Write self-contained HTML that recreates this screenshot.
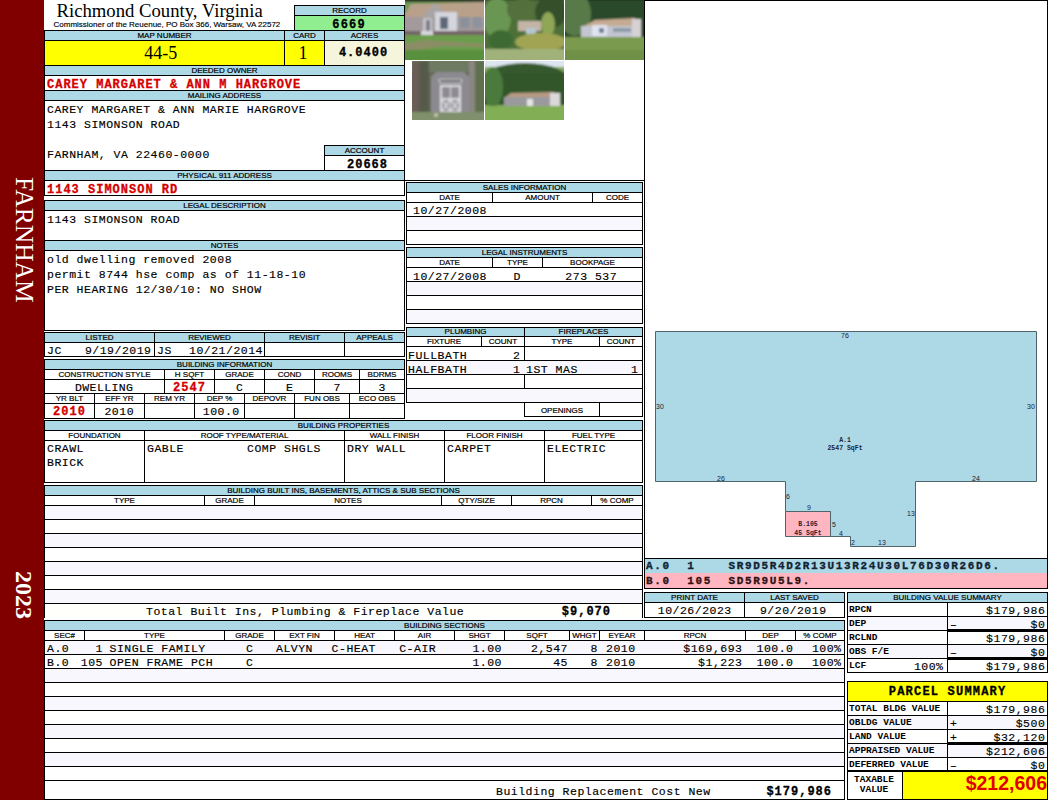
<!DOCTYPE html><html><head><meta charset="utf-8"><style>html,body{margin:0;padding:0;background:#fff;width:1050px;height:800px;overflow:hidden}body>div,#pg>div{position:absolute;white-space:pre}#pg{position:relative;width:1050px;height:800px;overflow:hidden}</style></head><body><div id="pg"><div style="left:0px;top:0px;width:44px;height:800px;background:#800000"></div>
<div style="top:-10.33px;font-family:'Liberation Serif', serif;font-size:12.33px;line-height:12.33px;color:#000;left:0px;"></div>
<div style="left:12px;top:177px;width:24px;height:126px;"><div style="position:absolute;left:0;top:0;transform-origin:0 0;transform:translate(24px,0) rotate(90deg);font-family:'Liberation Serif',serif;font-size:25.5px;line-height:24px;color:#fff;white-space:nowrap">FARNHAM</div></div>
<div style="left:12px;top:571px;width:24px;height:48px;"><div style="position:absolute;left:0;top:0;transform-origin:0 0;transform:translate(24px,0) rotate(90deg);font-family:'Liberation Serif',serif;font-weight:bold;font-size:24px;line-height:24px;color:#fff;white-space:nowrap">2023</div></div>
<div style="top:2.34px;font-family:'Liberation Serif', serif;font-size:18.7px;line-height:18.7px;color:#000;left:56.5px;">Richmond County, Virginia</div>
<div style="top:21.23px;font-family:'Liberation Sans', sans-serif;font-size:8px;line-height:8px;color:#000;-webkit-text-stroke:0.15px #000;left:53.5px;">Commissioner of the Reuenue, PO Box 366, Warsaw, VA 22572</div>
<div style="left:294px;top:5px;width:110px;height:10px;background:#add8e6"></div>
<div style="left:294px;top:15px;width:110px;height:15px;background:#90ee90"></div>
<div style="left:294px;top:5px;width:111px;height:1px;background:#000"></div>
<div style="left:294px;top:30px;width:111px;height:1px;background:#000"></div>
<div style="left:294px;top:5px;width:1px;height:26px;background:#000"></div>
<div style="left:404px;top:5px;width:1px;height:26px;background:#000"></div>
<div style="left:294px;top:15px;width:111px;height:1px;background:#000"></div>
<div style="top:7.23px;font-family:'Liberation Sans', sans-serif;font-size:8px;line-height:8px;color:#000;-webkit-text-stroke:0.2px #000;left:-50.5px;width:800px;text-align:center;">RECORD</div>
<div style="top:18.80px;font-family:'Liberation Mono', monospace;font-size:12px;line-height:12px;color:#000;font-weight:bold;letter-spacing:1.2px;-webkit-text-stroke:0.3px #000;left:-51.5px;width:800px;text-align:center;text-indent:1.2px;">6669</div>
<div style="left:44px;top:30px;width:360px;height:10px;background:#add8e6"></div>
<div style="left:44px;top:40px;width:280px;height:25px;background:#ffff00"></div>
<div style="left:324px;top:40px;width:80px;height:25px;background:#f5f5dc"></div>
<div style="left:44px;top:30px;width:361px;height:1px;background:#000"></div>
<div style="left:44px;top:40px;width:361px;height:1px;background:#000"></div>
<div style="left:44px;top:65px;width:361px;height:1px;background:#000"></div>
<div style="left:44px;top:30px;width:1px;height:36px;background:#000"></div>
<div style="left:284px;top:30px;width:1px;height:36px;background:#000"></div>
<div style="left:324px;top:30px;width:1px;height:36px;background:#000"></div>
<div style="left:404px;top:30px;width:1px;height:36px;background:#000"></div>
<div style="top:32.23px;font-family:'Liberation Sans', sans-serif;font-size:8px;line-height:8px;color:#000;-webkit-text-stroke:0.2px #000;left:-235.5px;width:800px;text-align:center;">MAP NUMBER</div>
<div style="top:32.23px;font-family:'Liberation Sans', sans-serif;font-size:8px;line-height:8px;color:#000;-webkit-text-stroke:0.2px #000;left:-95.5px;width:800px;text-align:center;">CARD</div>
<div style="top:32.23px;font-family:'Liberation Sans', sans-serif;font-size:8px;line-height:8px;color:#000;-webkit-text-stroke:0.2px #000;left:-35.5px;width:800px;text-align:center;">ACRES</div>
<div style="top:43.92px;font-family:'Liberation Serif', serif;font-size:18px;line-height:18px;color:#000;left:-239.3px;width:800px;text-align:center;">44-5</div>
<div style="top:43.92px;font-family:'Liberation Serif', serif;font-size:18px;line-height:18px;color:#000;left:-97px;width:800px;text-align:center;">1</div>
<div style="top:46.80px;font-family:'Liberation Mono', monospace;font-size:12px;line-height:12px;color:#000;font-weight:bold;letter-spacing:1.0px;-webkit-text-stroke:0.3px #000;left:-37px;width:800px;text-align:center;text-indent:1.0px;">4.0400</div>
<div style="left:44px;top:65px;width:360px;height:10px;background:#add8e6"></div>
<div style="left:44px;top:65px;width:361px;height:1px;background:#000"></div>
<div style="left:44px;top:75px;width:361px;height:1px;background:#000"></div>
<div style="top:67.23px;font-family:'Liberation Sans', sans-serif;font-size:8px;line-height:8px;color:#000;-webkit-text-stroke:0.2px #000;left:-175.5px;width:800px;text-align:center;">DEEDED OWNER</div>
<div style="left:44px;top:90px;width:361px;height:1px;background:#000"></div>
<div style="left:44px;top:65px;width:1px;height:26px;background:#000"></div>
<div style="left:404px;top:65px;width:1px;height:26px;background:#000"></div>
<div style="top:78.80px;font-family:'Liberation Mono', monospace;font-size:12px;line-height:12px;color:#d40000;font-weight:bold;letter-spacing:1.0px;-webkit-text-stroke:0.3px #d40000;left:47px;">CAREY MARGARET &amp; ANN M HARGROVE</div>
<div style="left:44px;top:90px;width:360px;height:10px;background:#add8e6"></div>
<div style="left:44px;top:90px;width:361px;height:1px;background:#000"></div>
<div style="left:44px;top:100px;width:361px;height:1px;background:#000"></div>
<div style="top:92.23px;font-family:'Liberation Sans', sans-serif;font-size:8px;line-height:8px;color:#000;-webkit-text-stroke:0.2px #000;left:-175.5px;width:800px;text-align:center;">MAILING ADDRESS</div>
<div style="left:44px;top:90px;width:1px;height:81px;background:#000"></div>
<div style="left:404px;top:90px;width:1px;height:81px;background:#000"></div>
<div style="top:104.19px;font-family:'Liberation Mono', monospace;font-size:11.5px;line-height:11.5px;color:#000;letter-spacing:0.5px;-webkit-text-stroke:0.15px #000;left:47px;">CAREY MARGARET &amp; ANN MARIE HARGROVE</div>
<div style="top:119.19px;font-family:'Liberation Mono', monospace;font-size:11.5px;line-height:11.5px;color:#000;letter-spacing:0.5px;-webkit-text-stroke:0.15px #000;left:47px;">1143 SIMONSON ROAD</div>
<div style="top:149.19px;font-family:'Liberation Mono', monospace;font-size:11.5px;line-height:11.5px;color:#000;letter-spacing:0.5px;-webkit-text-stroke:0.15px #000;left:47px;">FARNHAM, VA 22460-0000</div>
<div style="left:324px;top:145px;width:80px;height:10px;background:#add8e6"></div>
<div style="left:324px;top:145px;width:81px;height:1px;background:#000"></div>
<div style="left:324px;top:170px;width:81px;height:1px;background:#000"></div>
<div style="left:324px;top:145px;width:1px;height:26px;background:#000"></div>
<div style="left:404px;top:145px;width:1px;height:26px;background:#000"></div>
<div style="left:324px;top:155px;width:81px;height:1px;background:#000"></div>
<div style="top:147.23px;font-family:'Liberation Sans', sans-serif;font-size:8px;line-height:8px;color:#000;-webkit-text-stroke:0.2px #000;left:-35.5px;width:800px;text-align:center;">ACCOUNT</div>
<div style="top:158.80px;font-family:'Liberation Mono', monospace;font-size:12px;line-height:12px;color:#000;font-weight:bold;letter-spacing:1.0px;-webkit-text-stroke:0.3px #000;left:-33px;width:800px;text-align:center;text-indent:1.0px;">20668</div>
<div style="left:44px;top:170px;width:360px;height:10px;background:#add8e6"></div>
<div style="left:44px;top:170px;width:361px;height:1px;background:#000"></div>
<div style="left:44px;top:180px;width:361px;height:1px;background:#000"></div>
<div style="top:172.23px;font-family:'Liberation Sans', sans-serif;font-size:8px;line-height:8px;color:#000;-webkit-text-stroke:0.2px #000;left:-175.5px;width:800px;text-align:center;">PHYSICAL 911 ADDRESS</div>
<div style="left:44px;top:195px;width:361px;height:1px;background:#000"></div>
<div style="left:44px;top:170px;width:1px;height:26px;background:#000"></div>
<div style="left:404px;top:170px;width:1px;height:26px;background:#000"></div>
<div style="left:404px;top:180px;width:241px;height:1px;background:#000"></div>
<div style="top:183.80px;font-family:'Liberation Mono', monospace;font-size:12px;line-height:12px;color:#d40000;font-weight:bold;letter-spacing:1.0px;-webkit-text-stroke:0.3px #d40000;left:47px;">1143 SIMONSON RD</div>
<div style="left:44px;top:200px;width:360px;height:10px;background:#add8e6"></div>
<div style="left:44px;top:200px;width:361px;height:1px;background:#000"></div>
<div style="left:44px;top:210px;width:361px;height:1px;background:#000"></div>
<div style="top:202.23px;font-family:'Liberation Sans', sans-serif;font-size:8px;line-height:8px;color:#000;-webkit-text-stroke:0.2px #000;left:-175.5px;width:800px;text-align:center;">LEGAL DESCRIPTION</div>
<div style="left:44px;top:200px;width:1px;height:41px;background:#000"></div>
<div style="left:404px;top:200px;width:1px;height:41px;background:#000"></div>
<div style="top:214.19px;font-family:'Liberation Mono', monospace;font-size:11.5px;line-height:11.5px;color:#000;letter-spacing:0.5px;-webkit-text-stroke:0.15px #000;left:47px;">1143 SIMONSON ROAD</div>
<div style="left:44px;top:240px;width:360px;height:10px;background:#add8e6"></div>
<div style="left:44px;top:240px;width:361px;height:1px;background:#000"></div>
<div style="left:44px;top:250px;width:361px;height:1px;background:#000"></div>
<div style="top:242.23px;font-family:'Liberation Sans', sans-serif;font-size:8px;line-height:8px;color:#000;-webkit-text-stroke:0.2px #000;left:-175.5px;width:800px;text-align:center;">NOTES</div>
<div style="left:44px;top:330px;width:361px;height:1px;background:#000"></div>
<div style="left:44px;top:240px;width:1px;height:91px;background:#000"></div>
<div style="left:404px;top:240px;width:1px;height:91px;background:#000"></div>
<div style="top:254.19px;font-family:'Liberation Mono', monospace;font-size:11.5px;line-height:11.5px;color:#000;letter-spacing:0.5px;-webkit-text-stroke:0.15px #000;left:47px;">old dwelling removed 2008</div>
<div style="top:269.19px;font-family:'Liberation Mono', monospace;font-size:11.5px;line-height:11.5px;color:#000;letter-spacing:0.5px;-webkit-text-stroke:0.15px #000;left:47px;">permit 8744 hse comp as of 11-18-10</div>
<div style="top:284.19px;font-family:'Liberation Mono', monospace;font-size:11.5px;line-height:11.5px;color:#000;letter-spacing:0.5px;-webkit-text-stroke:0.15px #000;left:47px;">PER HEARING 12/30/10: NO SHOW</div>
<div style="left:44px;top:332px;width:360px;height:10px;background:#add8e6"></div>
<div style="left:44px;top:332px;width:361px;height:1px;background:#000"></div>
<div style="left:44px;top:342px;width:361px;height:1px;background:#000"></div>
<div style="left:44px;top:356px;width:361px;height:1px;background:#000"></div>
<div style="left:44px;top:332px;width:1px;height:25px;background:#000"></div>
<div style="left:154px;top:332px;width:1px;height:25px;background:#000"></div>
<div style="left:264px;top:332px;width:1px;height:25px;background:#000"></div>
<div style="left:344px;top:332px;width:1px;height:25px;background:#000"></div>
<div style="left:404px;top:332px;width:1px;height:25px;background:#000"></div>
<div style="top:334.23px;font-family:'Liberation Sans', sans-serif;font-size:8px;line-height:8px;color:#000;-webkit-text-stroke:0.2px #000;left:-300.5px;width:800px;text-align:center;">LISTED</div>
<div style="top:334.23px;font-family:'Liberation Sans', sans-serif;font-size:8px;line-height:8px;color:#000;-webkit-text-stroke:0.2px #000;left:-190.5px;width:800px;text-align:center;">REVIEWED</div>
<div style="top:334.23px;font-family:'Liberation Sans', sans-serif;font-size:8px;line-height:8px;color:#000;-webkit-text-stroke:0.2px #000;left:-95.5px;width:800px;text-align:center;">REVISIT</div>
<div style="top:334.23px;font-family:'Liberation Sans', sans-serif;font-size:8px;line-height:8px;color:#000;-webkit-text-stroke:0.2px #000;left:-25.5px;width:800px;text-align:center;">APPEALS</div>
<div style="top:345.19px;font-family:'Liberation Mono', monospace;font-size:11.5px;line-height:11.5px;color:#000;letter-spacing:0.5px;-webkit-text-stroke:0.15px #000;left:47px;">JC</div>
<div style="top:345.19px;font-family:'Liberation Mono', monospace;font-size:11.5px;line-height:11.5px;color:#000;letter-spacing:0.5px;-webkit-text-stroke:0.15px #000;right:899px;text-align:right;margin-right:-0.5px;">9/19/2019</div>
<div style="top:345.19px;font-family:'Liberation Mono', monospace;font-size:11.5px;line-height:11.5px;color:#000;letter-spacing:0.5px;-webkit-text-stroke:0.15px #000;left:157px;">JS</div>
<div style="top:345.19px;font-family:'Liberation Mono', monospace;font-size:11.5px;line-height:11.5px;color:#000;letter-spacing:0.5px;-webkit-text-stroke:0.15px #000;right:787.5px;text-align:right;margin-right:-0.5px;">10/21/2014</div>
<div style="left:44px;top:359px;width:360px;height:10px;background:#add8e6"></div>
<div style="left:44px;top:359px;width:361px;height:1px;background:#000"></div>
<div style="left:44px;top:369px;width:361px;height:1px;background:#000"></div>
<div style="top:361.23px;font-family:'Liberation Sans', sans-serif;font-size:8px;line-height:8px;color:#000;-webkit-text-stroke:0.2px #000;left:-175.5px;width:800px;text-align:center;">BUILDING INFORMATION</div>
<div style="left:44px;top:379px;width:361px;height:1px;background:#000"></div>
<div style="left:44px;top:393px;width:361px;height:1px;background:#000"></div>
<div style="left:44px;top:403px;width:361px;height:1px;background:#000"></div>
<div style="left:44px;top:418px;width:361px;height:1px;background:#000"></div>
<div style="left:44px;top:359px;width:1px;height:60px;background:#000"></div>
<div style="left:404px;top:359px;width:1px;height:60px;background:#000"></div>
<div style="left:164px;top:369px;width:1px;height:25px;background:#000"></div>
<div style="left:214px;top:369px;width:1px;height:25px;background:#000"></div>
<div style="left:264px;top:369px;width:1px;height:25px;background:#000"></div>
<div style="left:314px;top:369px;width:1px;height:25px;background:#000"></div>
<div style="left:359px;top:369px;width:1px;height:25px;background:#000"></div>
<div style="left:94px;top:393px;width:1px;height:26px;background:#000"></div>
<div style="left:144px;top:393px;width:1px;height:26px;background:#000"></div>
<div style="left:194px;top:393px;width:1px;height:26px;background:#000"></div>
<div style="left:244px;top:393px;width:1px;height:26px;background:#000"></div>
<div style="left:294px;top:393px;width:1px;height:26px;background:#000"></div>
<div style="left:349px;top:393px;width:1px;height:26px;background:#000"></div>
<div style="top:371.23px;font-family:'Liberation Sans', sans-serif;font-size:8px;line-height:8px;color:#000;-webkit-text-stroke:0.2px #000;left:-295.5px;width:800px;text-align:center;">CONSTRUCTION STYLE</div>
<div style="top:371.23px;font-family:'Liberation Sans', sans-serif;font-size:8px;line-height:8px;color:#000;-webkit-text-stroke:0.2px #000;left:-210.5px;width:800px;text-align:center;">H SQFT</div>
<div style="top:371.23px;font-family:'Liberation Sans', sans-serif;font-size:8px;line-height:8px;color:#000;-webkit-text-stroke:0.2px #000;left:-160.5px;width:800px;text-align:center;">GRADE</div>
<div style="top:371.23px;font-family:'Liberation Sans', sans-serif;font-size:8px;line-height:8px;color:#000;-webkit-text-stroke:0.2px #000;left:-110.5px;width:800px;text-align:center;">COND</div>
<div style="top:371.23px;font-family:'Liberation Sans', sans-serif;font-size:8px;line-height:8px;color:#000;-webkit-text-stroke:0.2px #000;left:-63.0px;width:800px;text-align:center;">ROOMS</div>
<div style="top:371.23px;font-family:'Liberation Sans', sans-serif;font-size:8px;line-height:8px;color:#000;-webkit-text-stroke:0.2px #000;left:-18.0px;width:800px;text-align:center;">BDRMS</div>
<div style="top:395.23px;font-family:'Liberation Sans', sans-serif;font-size:8px;line-height:8px;color:#000;-webkit-text-stroke:0.2px #000;left:-330.5px;width:800px;text-align:center;">YR BLT</div>
<div style="top:395.23px;font-family:'Liberation Sans', sans-serif;font-size:8px;line-height:8px;color:#000;-webkit-text-stroke:0.2px #000;left:-280.5px;width:800px;text-align:center;">EFF YR</div>
<div style="top:395.23px;font-family:'Liberation Sans', sans-serif;font-size:8px;line-height:8px;color:#000;-webkit-text-stroke:0.2px #000;left:-230.5px;width:800px;text-align:center;">REM YR</div>
<div style="top:395.23px;font-family:'Liberation Sans', sans-serif;font-size:8px;line-height:8px;color:#000;-webkit-text-stroke:0.2px #000;left:-180.5px;width:800px;text-align:center;">DEP %</div>
<div style="top:395.23px;font-family:'Liberation Sans', sans-serif;font-size:8px;line-height:8px;color:#000;-webkit-text-stroke:0.2px #000;left:-130.5px;width:800px;text-align:center;">DEPOVR</div>
<div style="top:395.23px;font-family:'Liberation Sans', sans-serif;font-size:8px;line-height:8px;color:#000;-webkit-text-stroke:0.2px #000;left:-78.0px;width:800px;text-align:center;">FUN OBS</div>
<div style="top:395.23px;font-family:'Liberation Sans', sans-serif;font-size:8px;line-height:8px;color:#000;-webkit-text-stroke:0.2px #000;left:-23.0px;width:800px;text-align:center;">ECO OBS</div>
<div style="top:381.69px;font-family:'Liberation Mono', monospace;font-size:11.5px;line-height:11.5px;color:#000;letter-spacing:0.4px;-webkit-text-stroke:0.15px #000;left:-296px;width:800px;text-align:center;text-indent:0.4px;">DWELLING</div>
<div style="top:381.80px;font-family:'Liberation Mono', monospace;font-size:12px;line-height:12px;color:#d40000;font-weight:bold;letter-spacing:1.0px;-webkit-text-stroke:0.3px #d40000;left:-211px;width:800px;text-align:center;text-indent:1.0px;">2547</div>
<div style="top:381.69px;font-family:'Liberation Mono', monospace;font-size:11.5px;line-height:11.5px;color:#000;letter-spacing:0.5px;-webkit-text-stroke:0.15px #000;left:-160.5px;width:800px;text-align:center;text-indent:0.5px;">C</div>
<div style="top:381.69px;font-family:'Liberation Mono', monospace;font-size:11.5px;line-height:11.5px;color:#000;letter-spacing:0.5px;-webkit-text-stroke:0.15px #000;left:-110.5px;width:800px;text-align:center;text-indent:0.5px;">E</div>
<div style="top:381.69px;font-family:'Liberation Mono', monospace;font-size:11.5px;line-height:11.5px;color:#000;letter-spacing:0.5px;-webkit-text-stroke:0.15px #000;left:-63px;width:800px;text-align:center;text-indent:0.5px;">7</div>
<div style="top:381.69px;font-family:'Liberation Mono', monospace;font-size:11.5px;line-height:11.5px;color:#000;letter-spacing:0.5px;-webkit-text-stroke:0.15px #000;left:-18px;width:800px;text-align:center;text-indent:0.5px;">3</div>
<div style="top:405.80px;font-family:'Liberation Mono', monospace;font-size:12px;line-height:12px;color:#d40000;font-weight:bold;letter-spacing:1.0px;-webkit-text-stroke:0.3px #d40000;left:-331px;width:800px;text-align:center;text-indent:1.0px;">2010</div>
<div style="top:406.19px;font-family:'Liberation Mono', monospace;font-size:11.5px;line-height:11.5px;color:#000;letter-spacing:0.5px;-webkit-text-stroke:0.15px #000;left:-281px;width:800px;text-align:center;text-indent:0.5px;">2010</div>
<div style="top:406.19px;font-family:'Liberation Mono', monospace;font-size:11.5px;line-height:11.5px;color:#000;letter-spacing:0.5px;-webkit-text-stroke:0.15px #000;left:-179px;width:800px;text-align:center;text-indent:0.5px;">100.0</div>
<div style="left:44px;top:420px;width:598px;height:10px;background:#add8e6"></div>
<div style="left:44px;top:420px;width:599px;height:1px;background:#000"></div>
<div style="left:44px;top:430px;width:599px;height:1px;background:#000"></div>
<div style="top:422.23px;font-family:'Liberation Sans', sans-serif;font-size:8px;line-height:8px;color:#000;-webkit-text-stroke:0.2px #000;left:-56.5px;width:800px;text-align:center;">BUILDING PROPERTIES</div>
<div style="left:44px;top:440px;width:599px;height:1px;background:#000"></div>
<div style="left:44px;top:482px;width:599px;height:1px;background:#000"></div>
<div style="left:44px;top:420px;width:1px;height:63px;background:#000"></div>
<div style="left:144px;top:430px;width:1px;height:53px;background:#000"></div>
<div style="left:344px;top:430px;width:1px;height:53px;background:#000"></div>
<div style="left:444px;top:430px;width:1px;height:53px;background:#000"></div>
<div style="left:544px;top:430px;width:1px;height:53px;background:#000"></div>
<div style="left:642px;top:420px;width:1px;height:63px;background:#000"></div>
<div style="top:432.23px;font-family:'Liberation Sans', sans-serif;font-size:8px;line-height:8px;color:#000;-webkit-text-stroke:0.2px #000;left:-305.5px;width:800px;text-align:center;">FOUNDATION</div>
<div style="top:432.23px;font-family:'Liberation Sans', sans-serif;font-size:8px;line-height:8px;color:#000;-webkit-text-stroke:0.2px #000;left:-155.5px;width:800px;text-align:center;">ROOF TYPE/MATERIAL</div>
<div style="top:432.23px;font-family:'Liberation Sans', sans-serif;font-size:8px;line-height:8px;color:#000;-webkit-text-stroke:0.2px #000;left:-5.5px;width:800px;text-align:center;">WALL FINISH</div>
<div style="top:432.23px;font-family:'Liberation Sans', sans-serif;font-size:8px;line-height:8px;color:#000;-webkit-text-stroke:0.2px #000;left:94.5px;width:800px;text-align:center;">FLOOR FINISH</div>
<div style="top:432.23px;font-family:'Liberation Sans', sans-serif;font-size:8px;line-height:8px;color:#000;-webkit-text-stroke:0.2px #000;left:193.5px;width:800px;text-align:center;">FUEL TYPE</div>
<div style="top:443.19px;font-family:'Liberation Mono', monospace;font-size:11.5px;line-height:11.5px;color:#000;letter-spacing:0.5px;-webkit-text-stroke:0.15px #000;left:47px;">CRAWL</div>
<div style="top:457.19px;font-family:'Liberation Mono', monospace;font-size:11.5px;line-height:11.5px;color:#000;letter-spacing:0.5px;-webkit-text-stroke:0.15px #000;left:47px;">BRICK</div>
<div style="top:443.19px;font-family:'Liberation Mono', monospace;font-size:11.5px;line-height:11.5px;color:#000;letter-spacing:0.5px;-webkit-text-stroke:0.15px #000;left:147px;">GABLE</div>
<div style="top:443.19px;font-family:'Liberation Mono', monospace;font-size:11.5px;line-height:11.5px;color:#000;letter-spacing:0.5px;-webkit-text-stroke:0.15px #000;left:247px;">COMP SHGLS</div>
<div style="top:443.19px;font-family:'Liberation Mono', monospace;font-size:11.5px;line-height:11.5px;color:#000;letter-spacing:0.5px;-webkit-text-stroke:0.15px #000;left:347px;">DRY WALL</div>
<div style="top:443.19px;font-family:'Liberation Mono', monospace;font-size:11.5px;line-height:11.5px;color:#000;letter-spacing:0.5px;-webkit-text-stroke:0.15px #000;left:447px;">CARPET</div>
<div style="top:443.19px;font-family:'Liberation Mono', monospace;font-size:11.5px;line-height:11.5px;color:#000;letter-spacing:0.5px;-webkit-text-stroke:0.15px #000;left:547px;">ELECTRIC</div>
<div style="left:44px;top:485px;width:598px;height:10px;background:#add8e6"></div>
<div style="left:44px;top:485px;width:599px;height:1px;background:#000"></div>
<div style="left:44px;top:495px;width:599px;height:1px;background:#000"></div>
<div style="top:487.23px;font-family:'Liberation Sans', sans-serif;font-size:8px;line-height:8px;color:#000;-webkit-text-stroke:0.2px #000;left:-56.5px;width:800px;text-align:center;">BUILDING BUILT INS, BASEMENTS, ATTICS &amp; SUB SECTIONS</div>
<div style="left:44px;top:505px;width:599px;height:1px;background:#000"></div>
<div style="left:204px;top:495px;width:1px;height:11px;background:#000"></div>
<div style="left:254px;top:495px;width:1px;height:11px;background:#000"></div>
<div style="left:441px;top:495px;width:1px;height:11px;background:#000"></div>
<div style="left:511px;top:495px;width:1px;height:11px;background:#000"></div>
<div style="left:591px;top:495px;width:1px;height:11px;background:#000"></div>
<div style="top:497.23px;font-family:'Liberation Sans', sans-serif;font-size:8px;line-height:8px;color:#000;-webkit-text-stroke:0.2px #000;left:-275.5px;width:800px;text-align:center;">TYPE</div>
<div style="top:497.23px;font-family:'Liberation Sans', sans-serif;font-size:8px;line-height:8px;color:#000;-webkit-text-stroke:0.2px #000;left:-170.5px;width:800px;text-align:center;">GRADE</div>
<div style="top:497.23px;font-family:'Liberation Sans', sans-serif;font-size:8px;line-height:8px;color:#000;-webkit-text-stroke:0.2px #000;left:-52.0px;width:800px;text-align:center;">NOTES</div>
<div style="top:497.23px;font-family:'Liberation Sans', sans-serif;font-size:8px;line-height:8px;color:#000;-webkit-text-stroke:0.2px #000;left:76.5px;width:800px;text-align:center;">QTY/SIZE</div>
<div style="top:497.23px;font-family:'Liberation Sans', sans-serif;font-size:8px;line-height:8px;color:#000;-webkit-text-stroke:0.2px #000;left:151.5px;width:800px;text-align:center;">RPCN</div>
<div style="top:497.23px;font-family:'Liberation Sans', sans-serif;font-size:8px;line-height:8px;color:#000;-webkit-text-stroke:0.2px #000;left:217.0px;width:800px;text-align:center;">% COMP</div>
<div style="left:45px;top:506px;width:597px;height:13px;background:#f7f7fd"></div>
<div style="left:44px;top:519px;width:599px;height:1px;background:#000"></div>
<div style="left:44px;top:533px;width:599px;height:1px;background:#000"></div>
<div style="left:45px;top:534px;width:597px;height:13px;background:#f7f7fd"></div>
<div style="left:44px;top:547px;width:599px;height:1px;background:#000"></div>
<div style="left:44px;top:561px;width:599px;height:1px;background:#000"></div>
<div style="left:45px;top:562px;width:597px;height:13px;background:#f7f7fd"></div>
<div style="left:44px;top:575px;width:599px;height:1px;background:#000"></div>
<div style="left:44px;top:589px;width:599px;height:1px;background:#000"></div>
<div style="left:45px;top:590px;width:597px;height:13px;background:#f7f7fd"></div>
<div style="left:44px;top:603px;width:599px;height:1px;background:#000"></div>
<div style="left:45px;top:604px;width:597px;height:13px;background:#fffffc"></div>
<div style="left:44px;top:485px;width:1px;height:133px;background:#000"></div>
<div style="left:642px;top:485px;width:1px;height:133px;background:#000"></div>
<div style="top:606.19px;font-family:'Liberation Mono', monospace;font-size:11.5px;line-height:11.5px;color:#000;letter-spacing:0.5px;-webkit-text-stroke:0.15px #000;left:146px;">Total Built Ins, Plumbing &amp; Fireplace Value</div>
<div style="top:605.80px;font-family:'Liberation Mono', monospace;font-size:12px;line-height:12px;color:#000;font-weight:bold;letter-spacing:1.0px;-webkit-text-stroke:0.3px #000;right:440px;text-align:right;margin-right:-1.0px;">$9,070</div>
<div style="left:44px;top:620px;width:800px;height:10px;background:#add8e6"></div>
<div style="left:44px;top:620px;width:801px;height:1px;background:#000"></div>
<div style="left:44px;top:630px;width:801px;height:1px;background:#000"></div>
<div style="top:622.23px;font-family:'Liberation Sans', sans-serif;font-size:8px;line-height:8px;color:#000;-webkit-text-stroke:0.2px #000;left:44.5px;width:800px;text-align:center;">BUILDING SECTIONS</div>
<div style="left:44px;top:640px;width:801px;height:1px;background:#000"></div>
<div style="left:84px;top:630px;width:1px;height:11px;background:#000"></div>
<div style="left:224px;top:630px;width:1px;height:11px;background:#000"></div>
<div style="left:274px;top:630px;width:1px;height:11px;background:#000"></div>
<div style="left:334px;top:630px;width:1px;height:11px;background:#000"></div>
<div style="left:394px;top:630px;width:1px;height:11px;background:#000"></div>
<div style="left:454px;top:630px;width:1px;height:11px;background:#000"></div>
<div style="left:504px;top:630px;width:1px;height:11px;background:#000"></div>
<div style="left:569px;top:630px;width:1px;height:11px;background:#000"></div>
<div style="left:599px;top:630px;width:1px;height:11px;background:#000"></div>
<div style="left:644px;top:630px;width:1px;height:11px;background:#000"></div>
<div style="left:745px;top:630px;width:1px;height:11px;background:#000"></div>
<div style="left:795px;top:630px;width:1px;height:11px;background:#000"></div>
<div style="top:632.23px;font-family:'Liberation Sans', sans-serif;font-size:8px;line-height:8px;color:#000;-webkit-text-stroke:0.2px #000;left:-335.5px;width:800px;text-align:center;">SEC#</div>
<div style="top:632.23px;font-family:'Liberation Sans', sans-serif;font-size:8px;line-height:8px;color:#000;-webkit-text-stroke:0.2px #000;left:-245.5px;width:800px;text-align:center;">TYPE</div>
<div style="top:632.23px;font-family:'Liberation Sans', sans-serif;font-size:8px;line-height:8px;color:#000;-webkit-text-stroke:0.2px #000;left:-150.5px;width:800px;text-align:center;">GRADE</div>
<div style="top:632.23px;font-family:'Liberation Sans', sans-serif;font-size:8px;line-height:8px;color:#000;-webkit-text-stroke:0.2px #000;left:-95.5px;width:800px;text-align:center;">EXT FIN</div>
<div style="top:632.23px;font-family:'Liberation Sans', sans-serif;font-size:8px;line-height:8px;color:#000;-webkit-text-stroke:0.2px #000;left:-35.5px;width:800px;text-align:center;">HEAT</div>
<div style="top:632.23px;font-family:'Liberation Sans', sans-serif;font-size:8px;line-height:8px;color:#000;-webkit-text-stroke:0.2px #000;left:24.5px;width:800px;text-align:center;">AIR</div>
<div style="top:632.23px;font-family:'Liberation Sans', sans-serif;font-size:8px;line-height:8px;color:#000;-webkit-text-stroke:0.2px #000;left:79.5px;width:800px;text-align:center;">SHGT</div>
<div style="top:632.23px;font-family:'Liberation Sans', sans-serif;font-size:8px;line-height:8px;color:#000;-webkit-text-stroke:0.2px #000;left:137.0px;width:800px;text-align:center;">SQFT</div>
<div style="top:632.23px;font-family:'Liberation Sans', sans-serif;font-size:8px;line-height:8px;color:#000;-webkit-text-stroke:0.2px #000;left:184.5px;width:800px;text-align:center;">WHGT</div>
<div style="top:632.23px;font-family:'Liberation Sans', sans-serif;font-size:8px;line-height:8px;color:#000;-webkit-text-stroke:0.2px #000;left:222.0px;width:800px;text-align:center;">EYEAR</div>
<div style="top:632.23px;font-family:'Liberation Sans', sans-serif;font-size:8px;line-height:8px;color:#000;-webkit-text-stroke:0.2px #000;left:295.0px;width:800px;text-align:center;">RPCN</div>
<div style="top:632.23px;font-family:'Liberation Sans', sans-serif;font-size:8px;line-height:8px;color:#000;-webkit-text-stroke:0.2px #000;left:370.5px;width:800px;text-align:center;">DEP</div>
<div style="top:632.23px;font-family:'Liberation Sans', sans-serif;font-size:8px;line-height:8px;color:#000;-webkit-text-stroke:0.2px #000;left:420.0px;width:800px;text-align:center;">% COMP</div>
<div style="left:45px;top:641px;width:799px;height:13px;background:#f7f7fd"></div>
<div style="left:44px;top:654px;width:801px;height:1px;background:#000"></div>
<div style="left:44px;top:668px;width:801px;height:1px;background:#000"></div>
<div style="left:45px;top:669px;width:799px;height:13px;background:#f7f7fd"></div>
<div style="left:44px;top:682px;width:801px;height:1px;background:#000"></div>
<div style="left:44px;top:696px;width:801px;height:1px;background:#000"></div>
<div style="left:45px;top:697px;width:799px;height:13px;background:#f7f7fd"></div>
<div style="left:44px;top:710px;width:801px;height:1px;background:#000"></div>
<div style="left:44px;top:724px;width:801px;height:1px;background:#000"></div>
<div style="left:45px;top:725px;width:799px;height:13px;background:#f7f7fd"></div>
<div style="left:44px;top:738px;width:801px;height:1px;background:#000"></div>
<div style="left:44px;top:752px;width:801px;height:1px;background:#000"></div>
<div style="left:45px;top:753px;width:799px;height:13px;background:#f7f7fd"></div>
<div style="left:44px;top:766px;width:801px;height:1px;background:#000"></div>
<div style="left:44px;top:780px;width:801px;height:1px;background:#000"></div>
<div style="left:44px;top:620px;width:1px;height:180px;background:#000"></div>
<div style="left:844px;top:620px;width:1px;height:180px;background:#000"></div>
<div style="top:643.19px;font-family:'Liberation Mono', monospace;font-size:11.5px;line-height:11.5px;color:#000;letter-spacing:0.5px;-webkit-text-stroke:0.15px #000;left:47px;">A.0</div>
<div style="top:643.19px;font-family:'Liberation Mono', monospace;font-size:11.5px;line-height:11.5px;color:#000;letter-spacing:0.5px;-webkit-text-stroke:0.15px #000;right:947.5px;text-align:right;margin-right:-0.5px;">1</div>
<div style="top:643.19px;font-family:'Liberation Mono', monospace;font-size:11.5px;line-height:11.5px;color:#000;letter-spacing:0.5px;-webkit-text-stroke:0.15px #000;left:109.5px;">SINGLE FAMILY</div>
<div style="top:643.19px;font-family:'Liberation Mono', monospace;font-size:11.5px;line-height:11.5px;color:#000;letter-spacing:0.5px;-webkit-text-stroke:0.15px #000;left:-150.5px;width:800px;text-align:center;text-indent:0.5px;">C</div>
<div style="top:643.19px;font-family:'Liberation Mono', monospace;font-size:11.5px;line-height:11.5px;color:#000;letter-spacing:0.5px;-webkit-text-stroke:0.15px #000;left:276px;">ALVYN</div>
<div style="top:643.19px;font-family:'Liberation Mono', monospace;font-size:11.5px;line-height:11.5px;color:#000;letter-spacing:0.5px;-webkit-text-stroke:0.15px #000;left:331.6px;">C-HEAT</div>
<div style="top:643.19px;font-family:'Liberation Mono', monospace;font-size:11.5px;line-height:11.5px;color:#000;letter-spacing:0.5px;-webkit-text-stroke:0.15px #000;left:399.2px;">C-AIR</div>
<div style="top:657.19px;font-family:'Liberation Mono', monospace;font-size:11.5px;line-height:11.5px;color:#000;letter-spacing:0.5px;-webkit-text-stroke:0.15px #000;left:47px;">B.0</div>
<div style="top:657.19px;font-family:'Liberation Mono', monospace;font-size:11.5px;line-height:11.5px;color:#000;letter-spacing:0.5px;-webkit-text-stroke:0.15px #000;right:947.5px;text-align:right;margin-right:-0.5px;">105</div>
<div style="top:657.19px;font-family:'Liberation Mono', monospace;font-size:11.5px;line-height:11.5px;color:#000;letter-spacing:0.5px;-webkit-text-stroke:0.15px #000;left:109.5px;">OPEN FRAME PCH</div>
<div style="top:657.19px;font-family:'Liberation Mono', monospace;font-size:11.5px;line-height:11.5px;color:#000;letter-spacing:0.5px;-webkit-text-stroke:0.15px #000;left:-150.5px;width:800px;text-align:center;text-indent:0.5px;">C</div>
<div style="top:643.19px;font-family:'Liberation Mono', monospace;font-size:11.5px;line-height:11.5px;color:#000;letter-spacing:0.5px;-webkit-text-stroke:0.15px #000;right:548.5px;text-align:right;margin-right:-0.5px;">1.00</div>
<div style="top:643.19px;font-family:'Liberation Mono', monospace;font-size:11.5px;line-height:11.5px;color:#000;letter-spacing:0.5px;-webkit-text-stroke:0.15px #000;right:482.5px;text-align:right;margin-right:-0.5px;">2,547</div>
<div style="top:643.19px;font-family:'Liberation Mono', monospace;font-size:11.5px;line-height:11.5px;color:#000;letter-spacing:0.5px;-webkit-text-stroke:0.15px #000;right:452.5px;text-align:right;margin-right:-0.5px;">8</div>
<div style="top:643.19px;font-family:'Liberation Mono', monospace;font-size:11.5px;line-height:11.5px;color:#000;letter-spacing:0.5px;-webkit-text-stroke:0.15px #000;left:606px;">2010</div>
<div style="top:657.19px;font-family:'Liberation Mono', monospace;font-size:11.5px;line-height:11.5px;color:#000;letter-spacing:0.5px;-webkit-text-stroke:0.15px #000;right:548.5px;text-align:right;margin-right:-0.5px;">1.00</div>
<div style="top:657.19px;font-family:'Liberation Mono', monospace;font-size:11.5px;line-height:11.5px;color:#000;letter-spacing:0.5px;-webkit-text-stroke:0.15px #000;right:482.5px;text-align:right;margin-right:-0.5px;">45</div>
<div style="top:657.19px;font-family:'Liberation Mono', monospace;font-size:11.5px;line-height:11.5px;color:#000;letter-spacing:0.5px;-webkit-text-stroke:0.15px #000;right:452.5px;text-align:right;margin-right:-0.5px;">8</div>
<div style="top:657.19px;font-family:'Liberation Mono', monospace;font-size:11.5px;line-height:11.5px;color:#000;letter-spacing:0.5px;-webkit-text-stroke:0.15px #000;left:606px;">2010</div>
<div style="top:643.19px;font-family:'Liberation Mono', monospace;font-size:11.5px;line-height:11.5px;color:#000;letter-spacing:0.5px;-webkit-text-stroke:0.15px #000;right:308px;text-align:right;margin-right:-0.5px;">$169,693</div>
<div style="top:643.19px;font-family:'Liberation Mono', monospace;font-size:11.5px;line-height:11.5px;color:#000;letter-spacing:0.5px;-webkit-text-stroke:0.15px #000;right:257px;text-align:right;margin-right:-0.5px;">100.0</div>
<div style="top:643.19px;font-family:'Liberation Mono', monospace;font-size:11.5px;line-height:11.5px;color:#000;letter-spacing:0.5px;-webkit-text-stroke:0.15px #000;right:209px;text-align:right;margin-right:-0.5px;">100%</div>
<div style="top:657.19px;font-family:'Liberation Mono', monospace;font-size:11.5px;line-height:11.5px;color:#000;letter-spacing:0.5px;-webkit-text-stroke:0.15px #000;right:308px;text-align:right;margin-right:-0.5px;">$1,223</div>
<div style="top:657.19px;font-family:'Liberation Mono', monospace;font-size:11.5px;line-height:11.5px;color:#000;letter-spacing:0.5px;-webkit-text-stroke:0.15px #000;right:257px;text-align:right;margin-right:-0.5px;">100.0</div>
<div style="top:657.19px;font-family:'Liberation Mono', monospace;font-size:11.5px;line-height:11.5px;color:#000;letter-spacing:0.5px;-webkit-text-stroke:0.15px #000;right:209px;text-align:right;margin-right:-0.5px;">100%</div>
<div style="left:44px;top:799px;width:801px;height:1px;background:#000"></div>
<div style="top:786.19px;font-family:'Liberation Mono', monospace;font-size:11.5px;line-height:11.5px;color:#000;letter-spacing:0.5px;-webkit-text-stroke:0.15px #000;left:496px;">Building Replacement Cost New</div>
<div style="top:785.80px;font-family:'Liberation Mono', monospace;font-size:12px;line-height:12px;color:#000;font-weight:bold;letter-spacing:1.0px;-webkit-text-stroke:0.3px #000;right:219px;text-align:right;margin-right:-1.0px;">$179,986</div>
<svg style="position:absolute;left:405px;top:0px" width="79" height="60" viewBox="0 0 79 60"><defs><filter id="b1" x="-5%" y="-5%" width="110%" height="110%"><feGaussianBlur stdDeviation="0.9"/></filter></defs><g filter="url(#b1)"><rect x="-3" y="-3" width="85" height="66" fill="#6f9a52"/><rect x="-3" y="-3" width="85" height="5" fill="#263026"/><polygon points="-3,19 6,4 80,2 82,17 -3,18" fill="#b8a08a"/><polygon points="17,17 30,3 39,13 37,17" fill="#a9a5a6"/><rect x="-3" y="17" width="85" height="16" fill="#a29a9b"/><rect x="30" y="12" width="22" height="21" fill="#d4d6de"/><rect x="35" y="17" width="8" height="12" fill="#5e6878"/><rect x="18" y="18" width="9" height="15" fill="#c4c4ca"/><rect x="21" y="20" width="4" height="11" fill="#7a7a84"/><rect x="55" y="17" width="9" height="11" fill="#8a909c"/><rect x="68" y="17" width="9" height="11" fill="#8c929e"/><rect x="-3" y="31" width="85" height="4" fill="#746468"/><rect x="16" y="31" width="12" height="4" fill="#d8d8de"/><rect x="-3" y="35" width="85" height="28" fill="#6a9e4c"/><polygon points="-3,44 20,40 50,42 82,44 82,47 40,46 -3,52" fill="#8c8c66"/><rect x="-3" y="50" width="85" height="13" fill="#58903e"/></g></svg>
<svg style="position:absolute;left:485px;top:0px" width="79" height="60" viewBox="0 0 79 60"><defs><filter id="b2" x="-5%" y="-5%" width="110%" height="110%"><feGaussianBlur stdDeviation="1.0"/></filter></defs><g filter="url(#b2)"><rect x="-3" y="-3" width="85" height="66" fill="#4e7038"/><rect x="-3" y="-3" width="85" height="3" fill="#1e2a1c"/><ellipse cx="12" cy="18" rx="14" ry="20" fill="#6a9652"/><ellipse cx="38" cy="10" rx="16" ry="12" fill="#52703e"/><ellipse cx="66" cy="12" rx="16" ry="16" fill="#35502c"/><rect x="33" y="21" width="23" height="10" fill="#c4b4a6"/><rect x="41" y="28" width="10" height="6" fill="#b6c6d2"/><ellipse cx="63" cy="24" rx="7" ry="12" fill="#8ea656"/><ellipse cx="16" cy="40" rx="12" ry="10" fill="#3e6a32"/><ellipse cx="56" cy="42" rx="26" ry="9" fill="#a0a452"/><rect x="-3" y="49" width="85" height="14" fill="#a0b27a"/></g></svg>
<svg style="position:absolute;left:565px;top:0px" width="79" height="60" viewBox="0 0 79 60"><defs><filter id="b3" x="-5%" y="-5%" width="110%" height="110%"><feGaussianBlur stdDeviation="0.9"/></filter></defs><g filter="url(#b3)"><rect x="-3" y="-3" width="85" height="66" fill="#76974c"/><rect x="-3" y="-3" width="85" height="40" fill="#2c4a2c"/><rect x="-3" y="-3" width="85" height="3" fill="#101810"/><ellipse cx="10" cy="14" rx="16" ry="22" fill="#587a4a"/><polygon points="17,27 30,20 70,18 76,26" fill="#c6aa92"/><rect x="16" y="26" width="60" height="11" fill="#c2c6d0"/><rect x="67" y="19" width="9" height="18" fill="#d6d2d4"/><rect x="27" y="25" width="15" height="11" fill="#e0e4ee"/><rect x="34" y="28" width="5" height="5" fill="#6d7f9a"/><rect x="48" y="28" width="18" height="4" fill="#8c9aa8"/><rect x="-3" y="37" width="85" height="26" fill="#7a9b4e"/><rect x="-3" y="50" width="85" height="13" fill="#6f8f46"/></g></svg>
<svg style="position:absolute;left:412px;top:61px" width="72" height="59" viewBox="0 0 72 59"><defs><filter id="b4" x="-5%" y="-5%" width="110%" height="110%"><feGaussianBlur stdDeviation="0.9"/></filter></defs><g filter="url(#b4)"><rect x="-3" y="-3" width="78" height="66" fill="#646a58"/><rect x="-3" y="-3" width="78" height="14" fill="#6e7a62"/><rect x="0" y="0" width="7" height="59" fill="#6a5c56"/><rect x="7" y="0" width="10" height="59" fill="#565a4c"/><rect x="57" y="0" width="6" height="59" fill="#8a8680"/><rect x="63" y="0" width="9" height="59" fill="#5e7050"/><polygon points="19,16 24,11 52,11 57,16 57,52 19,52" fill="#8c8a90"/><rect x="27" y="18" width="23" height="4" fill="#d0d0d4"/><rect x="28" y="19" width="21" height="2" fill="#3a3a42"/><rect x="28" y="24" width="21" height="27" fill="#dadade"/><rect x="30" y="26" width="8" height="11" fill="#8e8c92"/><rect x="39" y="26" width="8" height="11" fill="#8e8c92"/><rect x="30" y="39" width="8" height="11" fill="#9a989e"/><rect x="39" y="39" width="8" height="11" fill="#9a989e"/><path d="M30,39 L38,50 M38,39 L30,50 M39,39 L47,50 M47,39 L39,50" stroke="#e8e8ea" stroke-width="1.2"/><rect x="-3" y="51" width="78" height="12" fill="#80906c"/><circle cx="24" cy="54" r="2" fill="#c8c8b8"/></g></svg>
<svg style="position:absolute;left:485px;top:61px" width="79" height="59" viewBox="0 0 79 59"><defs><filter id="b5" x="-5%" y="-5%" width="110%" height="110%"><feGaussianBlur stdDeviation="0.9"/></filter></defs><g filter="url(#b5)"><rect x="-3" y="-3" width="85" height="66" fill="#86ac5c"/><rect x="-3" y="-3" width="85" height="9" fill="#dde6ee"/><ellipse cx="40" cy="22" rx="46" ry="20" fill="#35582e"/><rect x="-3" y="12" width="85" height="32" fill="#33562c"/><ellipse cx="8" cy="26" rx="10" ry="20" fill="#4b7a3c"/><polygon points="19,37 26,32 69,31 74,37" fill="#b89a82"/><rect x="19" y="36" width="56" height="10" fill="#9a9a9e"/><rect x="65" y="32" width="10" height="14" fill="#dad8d8"/><rect x="42" y="38" width="6" height="8" fill="#e6e6e6"/><rect x="-3" y="45" width="85" height="18" fill="#82ae56"/></g></svg>
<div style="left:406px;top:182px;width:236px;height:10px;background:#add8e6"></div>
<div style="left:406px;top:182px;width:237px;height:1px;background:#000"></div>
<div style="left:406px;top:192px;width:237px;height:1px;background:#000"></div>
<div style="top:184.23px;font-family:'Liberation Sans', sans-serif;font-size:8px;line-height:8px;color:#000;-webkit-text-stroke:0.2px #000;left:124.5px;width:800px;text-align:center;">SALES INFORMATION</div>
<div style="left:406px;top:182px;width:237px;height:1px;background:#000"></div>
<div style="left:406px;top:244px;width:237px;height:1px;background:#000"></div>
<div style="left:406px;top:182px;width:1px;height:63px;background:#000"></div>
<div style="left:642px;top:182px;width:1px;height:63px;background:#000"></div>
<div style="left:406px;top:202px;width:237px;height:1px;background:#000"></div>
<div style="left:492px;top:192px;width:1px;height:11px;background:#000"></div>
<div style="left:592px;top:192px;width:1px;height:11px;background:#000"></div>
<div style="top:194.23px;font-family:'Liberation Sans', sans-serif;font-size:8px;line-height:8px;color:#000;-webkit-text-stroke:0.2px #000;left:49.5px;width:800px;text-align:center;">DATE</div>
<div style="top:194.23px;font-family:'Liberation Sans', sans-serif;font-size:8px;line-height:8px;color:#000;-webkit-text-stroke:0.2px #000;left:142.5px;width:800px;text-align:center;">AMOUNT</div>
<div style="top:194.23px;font-family:'Liberation Sans', sans-serif;font-size:8px;line-height:8px;color:#000;-webkit-text-stroke:0.2px #000;left:217.5px;width:800px;text-align:center;">CODE</div>
<div style="left:407px;top:217px;width:235px;height:13px;background:#f7f7fd"></div>
<div style="left:406px;top:216px;width:237px;height:1px;background:#000"></div>
<div style="left:406px;top:230px;width:237px;height:1px;background:#000"></div>
<div style="top:205.19px;font-family:'Liberation Mono', monospace;font-size:11.5px;line-height:11.5px;color:#000;letter-spacing:0.5px;-webkit-text-stroke:0.15px #000;left:413px;">10/27/2008</div>
<div style="left:406px;top:247px;width:236px;height:10px;background:#add8e6"></div>
<div style="left:406px;top:247px;width:237px;height:1px;background:#000"></div>
<div style="left:406px;top:257px;width:237px;height:1px;background:#000"></div>
<div style="top:249.23px;font-family:'Liberation Sans', sans-serif;font-size:8px;line-height:8px;color:#000;-webkit-text-stroke:0.2px #000;left:124.5px;width:800px;text-align:center;">LEGAL INSTRUMENTS</div>
<div style="left:406px;top:247px;width:237px;height:1px;background:#000"></div>
<div style="left:406px;top:323px;width:237px;height:1px;background:#000"></div>
<div style="left:406px;top:247px;width:1px;height:77px;background:#000"></div>
<div style="left:642px;top:247px;width:1px;height:77px;background:#000"></div>
<div style="left:406px;top:267px;width:237px;height:1px;background:#000"></div>
<div style="left:492px;top:257px;width:1px;height:11px;background:#000"></div>
<div style="left:542px;top:257px;width:1px;height:11px;background:#000"></div>
<div style="top:259.23px;font-family:'Liberation Sans', sans-serif;font-size:8px;line-height:8px;color:#000;-webkit-text-stroke:0.2px #000;left:49.5px;width:800px;text-align:center;">DATE</div>
<div style="top:259.23px;font-family:'Liberation Sans', sans-serif;font-size:8px;line-height:8px;color:#000;-webkit-text-stroke:0.2px #000;left:117.5px;width:800px;text-align:center;">TYPE</div>
<div style="top:259.23px;font-family:'Liberation Sans', sans-serif;font-size:8px;line-height:8px;color:#000;-webkit-text-stroke:0.2px #000;left:192.5px;width:800px;text-align:center;">BOOKPAGE</div>
<div style="left:407px;top:282px;width:235px;height:13px;background:#f7f7fd"></div>
<div style="left:407px;top:310px;width:235px;height:13px;background:#f7f7fd"></div>
<div style="left:406px;top:281px;width:237px;height:1px;background:#000"></div>
<div style="left:406px;top:295px;width:237px;height:1px;background:#000"></div>
<div style="left:406px;top:309px;width:237px;height:1px;background:#000"></div>
<div style="top:270.69px;font-family:'Liberation Mono', monospace;font-size:11.5px;line-height:11.5px;color:#000;letter-spacing:0.5px;-webkit-text-stroke:0.15px #000;left:413px;">10/27/2008</div>
<div style="top:270.69px;font-family:'Liberation Mono', monospace;font-size:11.5px;line-height:11.5px;color:#000;letter-spacing:0.5px;-webkit-text-stroke:0.15px #000;left:117px;width:800px;text-align:center;text-indent:0.5px;">D</div>
<div style="top:270.69px;font-family:'Liberation Mono', monospace;font-size:11.5px;line-height:11.5px;color:#000;letter-spacing:0.5px;-webkit-text-stroke:0.15px #000;left:191px;width:800px;text-align:center;text-indent:0.5px;">273 537</div>
<div style="left:406px;top:327px;width:236px;height:9px;background:#add8e6"></div>
<div style="left:406px;top:327px;width:237px;height:1px;background:#000"></div>
<div style="left:406px;top:336px;width:237px;height:1px;background:#000"></div>
<div style="left:406px;top:346px;width:237px;height:1px;background:#000"></div>
<div style="left:406px;top:327px;width:1px;height:76px;background:#000"></div>
<div style="left:524px;top:327px;width:1px;height:90px;background:#000"></div>
<div style="left:642px;top:327px;width:1px;height:90px;background:#000"></div>
<div style="left:481px;top:336px;width:1px;height:11px;background:#000"></div>
<div style="left:599px;top:336px;width:1px;height:11px;background:#000"></div>
<div style="top:328.23px;font-family:'Liberation Sans', sans-serif;font-size:8px;line-height:8px;color:#000;-webkit-text-stroke:0.2px #000;left:65.5px;width:800px;text-align:center;">PLUMBING</div>
<div style="top:328.23px;font-family:'Liberation Sans', sans-serif;font-size:8px;line-height:8px;color:#000;-webkit-text-stroke:0.2px #000;left:183.5px;width:800px;text-align:center;">FIREPLACES</div>
<div style="top:338.23px;font-family:'Liberation Sans', sans-serif;font-size:8px;line-height:8px;color:#000;-webkit-text-stroke:0.2px #000;left:44px;width:800px;text-align:center;">FIXTURE</div>
<div style="top:338.23px;font-family:'Liberation Sans', sans-serif;font-size:8px;line-height:8px;color:#000;-webkit-text-stroke:0.2px #000;left:103px;width:800px;text-align:center;">COUNT</div>
<div style="top:338.23px;font-family:'Liberation Sans', sans-serif;font-size:8px;line-height:8px;color:#000;-webkit-text-stroke:0.2px #000;left:162px;width:800px;text-align:center;">TYPE</div>
<div style="top:338.23px;font-family:'Liberation Sans', sans-serif;font-size:8px;line-height:8px;color:#000;-webkit-text-stroke:0.2px #000;left:221px;width:800px;text-align:center;">COUNT</div>
<div style="left:407px;top:361px;width:235px;height:13px;background:#f7f7fd"></div>
<div style="left:407px;top:389px;width:235px;height:13px;background:#f7f7fd"></div>
<div style="left:406px;top:360px;width:237px;height:1px;background:#000"></div>
<div style="left:406px;top:374px;width:237px;height:1px;background:#000"></div>
<div style="left:406px;top:388px;width:237px;height:1px;background:#000"></div>
<div style="left:406px;top:402px;width:237px;height:1px;background:#000"></div>
<div style="left:524px;top:416px;width:119px;height:1px;background:#000"></div>
<div style="left:599px;top:402px;width:1px;height:15px;background:#000"></div>
<div style="top:407.23px;font-family:'Liberation Sans', sans-serif;font-size:8px;line-height:8px;color:#000;-webkit-text-stroke:0.2px #000;left:162px;width:800px;text-align:center;">OPENINGS</div>
<div style="top:350.19px;font-family:'Liberation Mono', monospace;font-size:11.5px;line-height:11.5px;color:#000;letter-spacing:0.5px;-webkit-text-stroke:0.15px #000;left:408px;">FULLBATH</div>
<div style="top:350.19px;font-family:'Liberation Mono', monospace;font-size:11.5px;line-height:11.5px;color:#000;letter-spacing:0.5px;-webkit-text-stroke:0.15px #000;right:530px;text-align:right;margin-right:-0.5px;">2</div>
<div style="top:364.19px;font-family:'Liberation Mono', monospace;font-size:11.5px;line-height:11.5px;color:#000;letter-spacing:0.5px;-webkit-text-stroke:0.15px #000;left:408px;">HALFBATH</div>
<div style="top:364.19px;font-family:'Liberation Mono', monospace;font-size:11.5px;line-height:11.5px;color:#000;letter-spacing:0.5px;-webkit-text-stroke:0.15px #000;right:530px;text-align:right;margin-right:-0.5px;">1</div>
<div style="top:364.19px;font-family:'Liberation Mono', monospace;font-size:11.5px;line-height:11.5px;color:#000;letter-spacing:0.5px;-webkit-text-stroke:0.15px #000;left:526px;">1ST MAS</div>
<div style="top:364.19px;font-family:'Liberation Mono', monospace;font-size:11.5px;line-height:11.5px;color:#000;letter-spacing:0.5px;-webkit-text-stroke:0.15px #000;right:412px;text-align:right;margin-right:-0.5px;">1</div>
<div style="left:644px;top:0px;width:404px;height:1px;background:#000"></div>
<div style="left:644px;top:0px;width:1px;height:589px;background:#000"></div>
<div style="left:1047px;top:0px;width:1px;height:589px;background:#000"></div>
<svg style="position:absolute;left:0;top:0" width="1050" height="800"><polygon points="785.5,511.5 830.5,511.5 830.5,536.5 850.5,536.5 850.5,546.5 915.5,546.5 915.5,481.5 1036.5,481.5 1036.5,331.5 655.5,331.5 655.5,481.5 785.5,481.5" fill="#add8e6" stroke="#50646c" stroke-width="1"/><polygon points="785.5,511.5 785.5,536.5 830.5,536.5 830.5,511.5" fill="#ffb6c1" stroke="#50646c" stroke-width="1"/></svg>
<div style="top:332.07px;font-family:'Liberation Sans', sans-serif;font-size:7px;line-height:7px;color:#223;left:445px;width:800px;text-align:center;">76</div>
<div style="top:403.07px;font-family:'Liberation Sans', sans-serif;font-size:7px;line-height:7px;color:#223;left:260px;width:800px;text-align:center;">30</div>
<div style="top:403.07px;font-family:'Liberation Sans', sans-serif;font-size:7px;line-height:7px;color:#223;left:631px;width:800px;text-align:center;">30</div>
<div style="top:475.07px;font-family:'Liberation Sans', sans-serif;font-size:7px;line-height:7px;color:#223;left:321px;width:800px;text-align:center;">26</div>
<div style="top:475.07px;font-family:'Liberation Sans', sans-serif;font-size:7px;line-height:7px;color:#223;left:576px;width:800px;text-align:center;">24</div>
<div style="top:493.07px;font-family:'Liberation Sans', sans-serif;font-size:7px;line-height:7px;color:#223;left:388px;width:800px;text-align:center;">6</div>
<div style="top:504.07px;font-family:'Liberation Sans', sans-serif;font-size:7px;line-height:7px;color:#223;left:409px;width:800px;text-align:center;">9</div>
<div style="top:521.07px;font-family:'Liberation Sans', sans-serif;font-size:7px;line-height:7px;color:#223;left:434px;width:800px;text-align:center;">5</div>
<div style="top:530.07px;font-family:'Liberation Sans', sans-serif;font-size:7px;line-height:7px;color:#223;left:441px;width:800px;text-align:center;">4</div>
<div style="top:539.07px;font-family:'Liberation Sans', sans-serif;font-size:7px;line-height:7px;color:#223;left:453px;width:800px;text-align:center;">2</div>
<div style="top:539.07px;font-family:'Liberation Sans', sans-serif;font-size:7px;line-height:7px;color:#223;left:482px;width:800px;text-align:center;">13</div>
<div style="top:510.07px;font-family:'Liberation Sans', sans-serif;font-size:7px;line-height:7px;color:#223;left:511px;width:800px;text-align:center;">13</div>
<div style="top:438.02px;font-family:'Liberation Mono', monospace;font-size:6.5px;line-height:6.5px;color:#223;font-weight:bold;left:445px;width:800px;text-align:center;">A.1</div>
<div style="top:446.02px;font-family:'Liberation Mono', monospace;font-size:6.5px;line-height:6.5px;color:#223;font-weight:bold;left:445px;width:800px;text-align:center;">2547 SqFt</div>
<div style="top:522.02px;font-family:'Liberation Mono', monospace;font-size:6.5px;line-height:6.5px;color:#223;font-weight:bold;left:408px;width:800px;text-align:center;">B.105</div>
<div style="top:531.02px;font-family:'Liberation Mono', monospace;font-size:6.5px;line-height:6.5px;color:#223;font-weight:bold;left:408px;width:800px;text-align:center;">45 SqFt</div>
<div style="left:645px;top:559px;width:402px;height:14px;background:#add8e6"></div>
<div style="left:645px;top:573px;width:402px;height:15px;background:#ffb6c1"></div>
<div style="left:644px;top:558px;width:404px;height:1px;background:#000"></div>
<div style="left:644px;top:588px;width:404px;height:1px;background:#000"></div>
<div style="top:561.07px;font-family:'Liberation Mono', monospace;font-size:11px;line-height:11px;color:#123;font-weight:bold;letter-spacing:1.65px;-webkit-text-stroke:0.3px #123;left:646px;">A.0  1    SR9D5R4D2R13U13R24U30L76D30R26D6.</div>
<div style="top:575.57px;font-family:'Liberation Mono', monospace;font-size:11px;line-height:11px;color:#311;font-weight:bold;letter-spacing:1.65px;-webkit-text-stroke:0.3px #311;left:646px;">B.0  105  SD5R9U5L9.</div>
<div style="left:644px;top:592px;width:200px;height:10px;background:#add8e6"></div>
<div style="left:644px;top:592px;width:201px;height:1px;background:#000"></div>
<div style="left:644px;top:617px;width:201px;height:1px;background:#000"></div>
<div style="left:644px;top:592px;width:1px;height:26px;background:#000"></div>
<div style="left:844px;top:592px;width:1px;height:26px;background:#000"></div>
<div style="left:644px;top:602px;width:201px;height:1px;background:#000"></div>
<div style="left:744px;top:592px;width:1px;height:26px;background:#000"></div>
<div style="top:594.23px;font-family:'Liberation Sans', sans-serif;font-size:8px;line-height:8px;color:#000;-webkit-text-stroke:0.2px #000;left:294.5px;width:800px;text-align:center;">PRINT DATE</div>
<div style="top:594.23px;font-family:'Liberation Sans', sans-serif;font-size:8px;line-height:8px;color:#000;-webkit-text-stroke:0.2px #000;left:394.5px;width:800px;text-align:center;">LAST SAVED</div>
<div style="top:605.19px;font-family:'Liberation Mono', monospace;font-size:11.5px;line-height:11.5px;color:#000;letter-spacing:0.5px;-webkit-text-stroke:0.15px #000;left:294.5px;width:800px;text-align:center;text-indent:0.5px;">10/26/2023</div>
<div style="top:605.19px;font-family:'Liberation Mono', monospace;font-size:11.5px;line-height:11.5px;color:#000;letter-spacing:0.5px;-webkit-text-stroke:0.15px #000;left:393px;width:800px;text-align:center;text-indent:0.5px;">9/20/2019</div>
<div style="left:847px;top:592px;width:200px;height:10px;background:#add8e6"></div>
<div style="left:847px;top:592px;width:201px;height:1px;background:#000"></div>
<div style="left:847px;top:672px;width:201px;height:1px;background:#000"></div>
<div style="left:847px;top:592px;width:1px;height:81px;background:#000"></div>
<div style="left:1047px;top:592px;width:1px;height:81px;background:#000"></div>
<div style="left:847px;top:602px;width:201px;height:1px;background:#000"></div>
<div style="top:594.23px;font-family:'Liberation Sans', sans-serif;font-size:8px;line-height:8px;color:#000;-webkit-text-stroke:0.2px #000;left:547.5px;width:800px;text-align:center;">BUILDING VALUE SUMMARY</div>
<div style="left:847px;top:616px;width:201px;height:1px;background:#000"></div>
<div style="top:605.22px;font-family:'Liberation Mono', monospace;font-size:9.5px;line-height:9.5px;color:#000;font-weight:bold;left:849px;">RPCN</div>
<div style="top:605.19px;font-family:'Liberation Mono', monospace;font-size:11.5px;line-height:11.5px;color:#000;letter-spacing:0.5px;-webkit-text-stroke:0.15px #000;right:5.2000000000000455px;text-align:right;margin-right:-0.5px;">$179,986</div>
<div style="left:848px;top:617px;width:199px;height:13px;background:#f7f7fd"></div>
<div style="left:847px;top:630px;width:201px;height:1px;background:#000"></div>
<div style="top:619.22px;font-family:'Liberation Mono', monospace;font-size:9.5px;line-height:9.5px;color:#000;font-weight:bold;left:849px;">DEP</div>
<div style="top:619.19px;font-family:'Liberation Mono', monospace;font-size:11.5px;line-height:11.5px;color:#000;letter-spacing:0.5px;-webkit-text-stroke:0.15px #000;left:950px;">–</div>
<div style="top:619.19px;font-family:'Liberation Mono', monospace;font-size:11.5px;line-height:11.5px;color:#000;letter-spacing:0.5px;-webkit-text-stroke:0.15px #000;right:5.2000000000000455px;text-align:right;margin-right:-0.5px;">$0</div>
<div style="left:847px;top:644px;width:201px;height:1px;background:#000"></div>
<div style="top:633.22px;font-family:'Liberation Mono', monospace;font-size:9.5px;line-height:9.5px;color:#000;font-weight:bold;left:849px;">RCLND</div>
<div style="top:633.19px;font-family:'Liberation Mono', monospace;font-size:11.5px;line-height:11.5px;color:#000;letter-spacing:0.5px;-webkit-text-stroke:0.15px #000;right:5.2000000000000455px;text-align:right;margin-right:-0.5px;">$179,986</div>
<div style="left:848px;top:645px;width:199px;height:13px;background:#f7f7fd"></div>
<div style="left:847px;top:658px;width:201px;height:1px;background:#000"></div>
<div style="top:647.22px;font-family:'Liberation Mono', monospace;font-size:9.5px;line-height:9.5px;color:#000;font-weight:bold;left:849px;">OBS F/E</div>
<div style="top:647.19px;font-family:'Liberation Mono', monospace;font-size:11.5px;line-height:11.5px;color:#000;letter-spacing:0.5px;-webkit-text-stroke:0.15px #000;left:950px;">–</div>
<div style="top:647.19px;font-family:'Liberation Mono', monospace;font-size:11.5px;line-height:11.5px;color:#000;letter-spacing:0.5px;-webkit-text-stroke:0.15px #000;right:5.2000000000000455px;text-align:right;margin-right:-0.5px;">$0</div>
<div style="left:847px;top:672px;width:201px;height:1px;background:#000"></div>
<div style="top:661.22px;font-family:'Liberation Mono', monospace;font-size:9.5px;line-height:9.5px;color:#000;font-weight:bold;left:849px;">LCF</div>
<div style="top:661.19px;font-family:'Liberation Mono', monospace;font-size:11.5px;line-height:11.5px;color:#000;letter-spacing:0.5px;-webkit-text-stroke:0.15px #000;right:5.2000000000000455px;text-align:right;margin-right:-0.5px;">$179,986</div>
<div style="left:947px;top:602px;width:1px;height:71px;background:#000"></div>
<div style="left:947px;top:629px;width:101px;height:3px;background:#000"></div>
<div style="left:947px;top:657px;width:101px;height:3px;background:#000"></div>
<div style="top:661.19px;font-family:'Liberation Mono', monospace;font-size:11.5px;line-height:11.5px;color:#000;letter-spacing:0.5px;-webkit-text-stroke:0.15px #000;right:107px;text-align:right;margin-right:-0.5px;">100%</div>
<div style="left:847px;top:681px;width:200px;height:20px;background:#ffff00"></div>
<div style="left:847px;top:681px;width:201px;height:1px;background:#000"></div>
<div style="left:847px;top:799px;width:201px;height:1px;background:#000"></div>
<div style="left:847px;top:681px;width:1px;height:119px;background:#000"></div>
<div style="left:1047px;top:681px;width:1px;height:119px;background:#000"></div>
<div style="left:847px;top:701px;width:201px;height:1px;background:#000"></div>
<div style="top:686.30px;font-family:'Liberation Mono', monospace;font-size:12px;line-height:12px;color:#000;font-weight:bold;letter-spacing:1.2px;-webkit-text-stroke:0.3px #000;left:547px;width:800px;text-align:center;text-indent:1.2px;">PARCEL SUMMARY</div>
<div style="left:847px;top:715px;width:201px;height:1px;background:#000"></div>
<div style="top:704.22px;font-family:'Liberation Mono', monospace;font-size:9.5px;line-height:9.5px;color:#000;font-weight:bold;left:849px;">TOTAL BLDG VALUE</div>
<div style="top:704.19px;font-family:'Liberation Mono', monospace;font-size:11.5px;line-height:11.5px;color:#000;letter-spacing:0.5px;-webkit-text-stroke:0.15px #000;right:5.2000000000000455px;text-align:right;margin-right:-0.5px;">$179,986</div>
<div style="left:848px;top:716px;width:199px;height:13px;background:#f7f7fd"></div>
<div style="left:847px;top:729px;width:201px;height:1px;background:#000"></div>
<div style="top:718.22px;font-family:'Liberation Mono', monospace;font-size:9.5px;line-height:9.5px;color:#000;font-weight:bold;left:849px;">OBLDG VALUE</div>
<div style="top:718.19px;font-family:'Liberation Mono', monospace;font-size:11.5px;line-height:11.5px;color:#000;letter-spacing:0.5px;-webkit-text-stroke:0.15px #000;left:950px;">+</div>
<div style="top:718.19px;font-family:'Liberation Mono', monospace;font-size:11.5px;line-height:11.5px;color:#000;letter-spacing:0.5px;-webkit-text-stroke:0.15px #000;right:5.2000000000000455px;text-align:right;margin-right:-0.5px;">$500</div>
<div style="left:847px;top:743px;width:201px;height:1px;background:#000"></div>
<div style="top:732.22px;font-family:'Liberation Mono', monospace;font-size:9.5px;line-height:9.5px;color:#000;font-weight:bold;left:849px;">LAND VALUE</div>
<div style="top:732.19px;font-family:'Liberation Mono', monospace;font-size:11.5px;line-height:11.5px;color:#000;letter-spacing:0.5px;-webkit-text-stroke:0.15px #000;left:950px;">+</div>
<div style="top:732.19px;font-family:'Liberation Mono', monospace;font-size:11.5px;line-height:11.5px;color:#000;letter-spacing:0.5px;-webkit-text-stroke:0.15px #000;right:5.2000000000000455px;text-align:right;margin-right:-0.5px;">$32,120</div>
<div style="left:848px;top:744px;width:199px;height:13px;background:#f7f7fd"></div>
<div style="left:847px;top:757px;width:201px;height:1px;background:#000"></div>
<div style="top:746.22px;font-family:'Liberation Mono', monospace;font-size:9.5px;line-height:9.5px;color:#000;font-weight:bold;left:849px;">APPRAISED VALUE</div>
<div style="top:746.19px;font-family:'Liberation Mono', monospace;font-size:11.5px;line-height:11.5px;color:#000;letter-spacing:0.5px;-webkit-text-stroke:0.15px #000;right:5.2000000000000455px;text-align:right;margin-right:-0.5px;">$212,606</div>
<div style="left:847px;top:771px;width:201px;height:1px;background:#000"></div>
<div style="top:760.22px;font-family:'Liberation Mono', monospace;font-size:9.5px;line-height:9.5px;color:#000;font-weight:bold;left:849px;">DEFERRED VALUE</div>
<div style="top:760.19px;font-family:'Liberation Mono', monospace;font-size:11.5px;line-height:11.5px;color:#000;letter-spacing:0.5px;-webkit-text-stroke:0.15px #000;left:950px;">–</div>
<div style="top:760.19px;font-family:'Liberation Mono', monospace;font-size:11.5px;line-height:11.5px;color:#000;letter-spacing:0.5px;-webkit-text-stroke:0.15px #000;right:5.2000000000000455px;text-align:right;margin-right:-0.5px;">$0</div>
<div style="left:947px;top:701px;width:1px;height:71px;background:#000"></div>
<div style="left:947px;top:742px;width:101px;height:3px;background:#000"></div>
<div style="left:847px;top:770px;width:201px;height:2px;background:#000"></div>
<div style="left:902px;top:772px;width:145px;height:27px;background:#ffff00"></div>
<div style="left:902px;top:771px;width:1px;height:29px;background:#000"></div>
<div style="top:774.72px;font-family:'Liberation Mono', monospace;font-size:9.5px;line-height:9.5px;color:#000;font-weight:bold;left:474px;width:800px;text-align:center;">TAXABLE</div>
<div style="top:784.72px;font-family:'Liberation Mono', monospace;font-size:9.5px;line-height:9.5px;color:#000;font-weight:bold;left:474px;width:800px;text-align:center;">VALUE</div>
<div style="top:774.49px;font-family:'Liberation Sans', sans-serif;font-size:19.5px;line-height:19.5px;color:#e00000;font-weight:bold;right:3px;text-align:right;">$212,606</div></div></body></html>
